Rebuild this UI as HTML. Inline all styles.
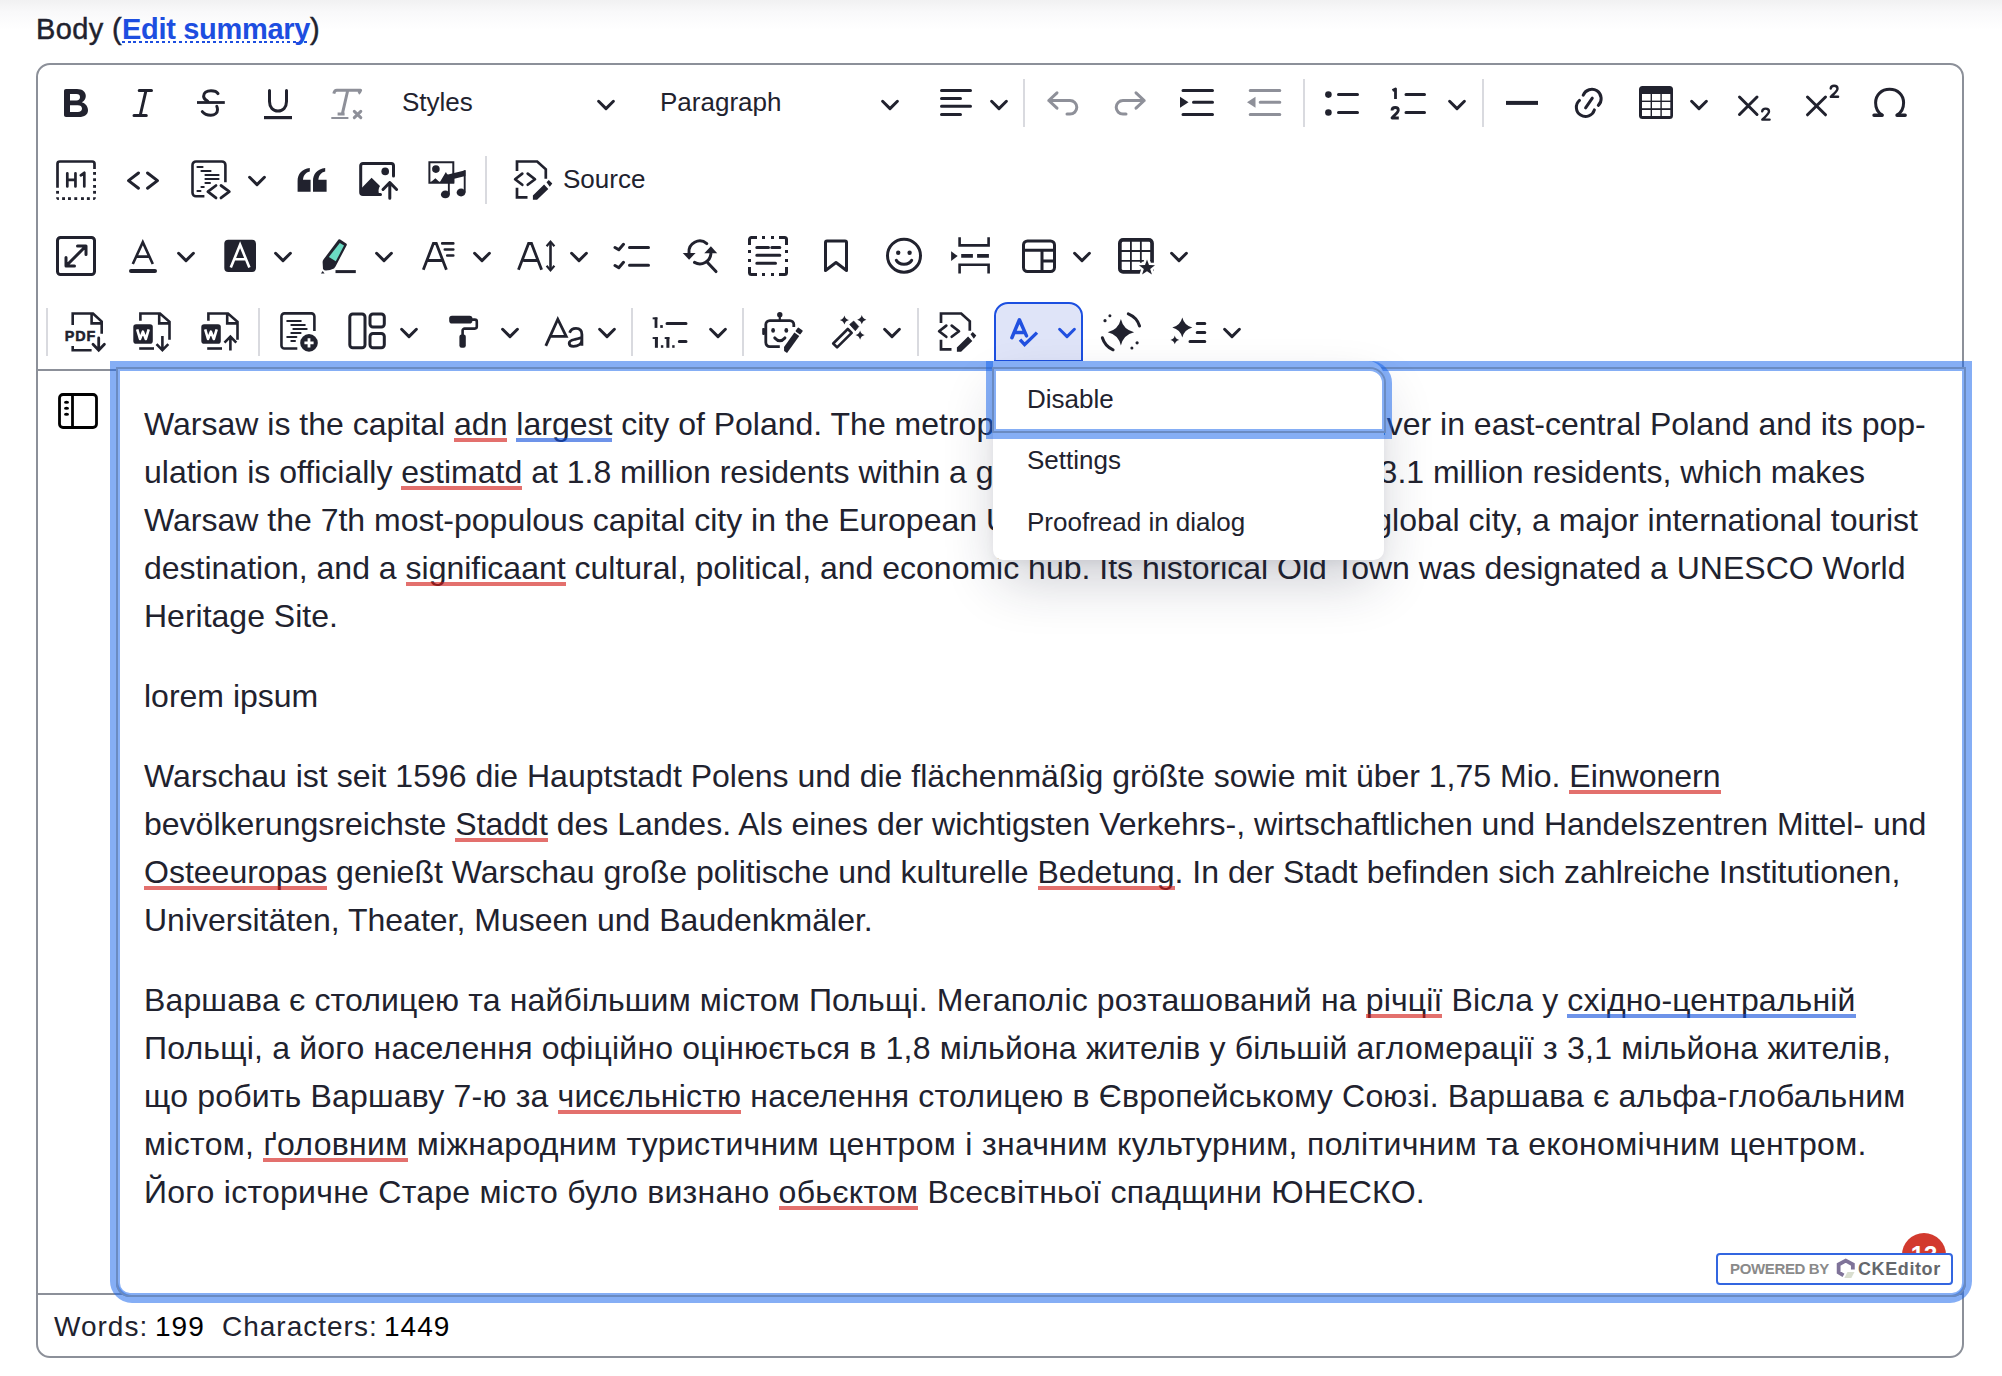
<!DOCTYPE html>
<html><head><meta charset="utf-8">
<style>
html,body{margin:0;padding:0;background:#fff;}
body{width:2002px;height:1376px;position:relative;overflow:hidden;font-family:"Liberation Sans",sans-serif;color:#21222e;}
.topshade{position:absolute;left:0;top:0;width:2002px;height:30px;background:linear-gradient(#f1f1f2,#f9f9fa 40%,#ffffff);}
.label{position:absolute;left:36px;top:11px;font-size:29px;line-height:36px;white-space:nowrap;-webkit-text-stroke:0.45px #21222e;}
.label a{color:#1d4ee0;font-weight:bold;text-decoration:none;background:repeating-linear-gradient(90deg,#1d4ee0 0 2.8px,transparent 2.8px 5.7px) 0 calc(100% - 1.5px)/100% 2.4px no-repeat;}
.frame{position:absolute;left:36px;top:63px;width:1928px;height:1295px;box-sizing:border-box;border:2px solid #8c9099;border-radius:14px;}
.tbline{position:absolute;left:38px;top:369px;width:1924px;height:2px;background:#8c9099;}
.ftline{position:absolute;left:38px;top:1293px;width:1924px;height:2px;background:#8c9099;}
.i{position:absolute;overflow:visible;}
.sep{position:absolute;width:2px;background:#d9dadf;}
.t26{position:absolute;font-size:26px;line-height:32px;white-space:nowrap;}
.edit{position:absolute;left:116px;top:367px;width:1850px;height:930px;box-sizing:border-box;border:2px solid #8c9099;border-radius:0 0 14px 14px;background:#fff;}
.edl{position:absolute;left:116px;top:367px;width:1850px;height:930px;box-sizing:border-box;border:2px solid #6a8bc2;border-radius:0 0 14px 14px;}
.ring{position:absolute;left:110px;top:361px;width:1862px;height:942px;box-sizing:border-box;border:8px solid rgba(22,100,235,0.52);border-radius:0 0 22px 22px;}
.ringin{position:absolute;left:118px;top:369px;width:1846px;height:926px;box-sizing:border-box;border:2px solid rgba(22,100,235,0.52);border-radius:0 0 12px 12px;}
.p{position:absolute;left:144px;font-size:32px;line-height:48px;white-space:nowrap;}
.sp{position:relative;}
.sp::after{content:"";position:absolute;left:0;right:0;bottom:-0.2px;height:4px;background:rgba(210,25,20,0.62);}
.gr{position:relative;}
.gr::after{content:"";position:absolute;left:0;right:0;bottom:-0.2px;height:4px;background:rgba(20,80,220,0.62);}
.sidebar{position:absolute;left:58px;top:393px;}
.footer{position:absolute;top:1307px;font-size:28px;line-height:40px;white-space:nowrap;letter-spacing:1px;}
.panel{position:absolute;left:993px;top:361px;width:391px;height:199px;background:#fff;border-radius:0 16px 10px 10px;box-shadow:0 26px 56px -8px rgba(30,35,60,0.24),0 3px 8px rgba(30,35,60,0.05);}
.mi{position:absolute;left:1027px;font-size:26px;line-height:32px;white-space:nowrap;}
.itemb{position:absolute;left:992px;top:367px;width:394px;height:66px;box-sizing:border-box;border:2px solid #6a8bc2;border-radius:0 16px 0 0;}
.itemring{position:absolute;left:986px;top:361px;width:406px;height:78px;box-sizing:border-box;border:8px solid rgba(22,100,235,0.52);border-radius:0 22px 0 0;}
.itemringin{position:absolute;left:994px;top:369px;width:390px;height:62px;box-sizing:border-box;border:2px solid rgba(22,100,235,0.52);border-radius:0 14px 0 0;}
.powered{position:absolute;left:1716px;top:1253px;width:237px;height:32px;box-sizing:border-box;border:2px solid #3366e0;border-radius:4px;background:#fff;}
.badge{position:absolute;left:1902px;top:1233px;width:44px;height:44px;border-radius:50%;background:#d23a2e;color:#fff;font-weight:bold;font-size:24px;line-height:44px;text-align:center;}
</style></head><body>
<div class="topshade"></div>
<div class="label"><span style="letter-spacing:0.35px">Body (</span><a style="letter-spacing:-0.3px;-webkit-text-stroke:0">Edit summary</a>)</div>
<div class="frame"></div>
<div class="tbline"></div>
<div class="ftline"></div>
<svg class="i" style="left:56.0px;top:83.0px" width="40" height="40" viewBox="0 0 40 40"><path fill="#21222e" fill-rule="evenodd" d="M10,6 H21 C26.5,6 29.8,8.8 29.8,13 C29.8,16 28.2,18 25.8,19.2 C29.2,20.3 32,23 32,27.2 C32,31.6 28.6,34 23,34 H10 C8.8,34 8,33.2 8,32 V8 C8,6.8 8.8,6 10,6 Z M14,11 V17.4 H20.5 C22.8,17.4 24,16.2 24,14.2 C24,12.2 22.8,11 20.5,11 Z M14,22.2 V29 H21.8 C24.4,29 26,27.8 26,25.6 C26,23.4 24.4,22.2 21.8,22.2 Z"/></svg>
<svg class="i" style="left:123.0px;top:83.0px" width="40" height="40" viewBox="0 0 40 40"><path d="M16.2,7.5 H28.5 M11,32.5 H23.3 M23,7.5 L17.2,32.5" fill="none" stroke="#21222e" stroke-width="3" stroke-linecap="round" stroke-linejoin="round"/></svg>
<svg class="i" style="left:191.0px;top:83.0px" width="40" height="40" viewBox="0 0 40 40"><path d="M27,10.6 C25.5,8.3 23,7.8 20,7.8 C15.5,7.8 12.6,10 12.6,13.2 C12.6,15.5 14.5,17 16.8,18.3 M25.8,23.3 C26.3,24.3 26.5,25.5 26.5,26.8 C26.5,30 23.8,32.2 19.8,32.2 C16,32.2 13.2,31 11.3,28.6" fill="none" stroke="#21222e" stroke-width="3" stroke-linecap="round" stroke-linejoin="round"/><path d="M6,19.5 H33.8" fill="none" stroke="#21222e" stroke-width="2.8"/></svg>
<svg class="i" style="left:258.0px;top:83.0px" width="40" height="40" viewBox="0 0 40 40"><path d="M11.5,7.5 V18.5 C11.5,24.2 15,28 20,28 C25,28 28.5,24.2 28.5,18.5 V7.5" fill="none" stroke="#21222e" stroke-width="3" stroke-linecap="round" stroke-linejoin="round"/><path d="M6,34.6 H34" fill="none" stroke="#21222e" stroke-width="3.2"/></svg>
<svg class="i" style="left:327.0px;top:83.0px" width="40" height="40" viewBox="0 0 40 40"><path d="M6.8,10.6 Q7.6,7.3 9.8,7.3 H33.6 Q32.8,9.6 31.4,10.4 M20.6,8 L15.4,30.6 M10.6,30.9 H17.6" fill="none" stroke="#8e9099" stroke-width="3" stroke-linejoin="round"/><path d="M4.3,35 H21.4" fill="none" stroke="#8e9099" stroke-width="2"/><path d="M27.3,28.3 L33.8,34.6 M33.8,28.3 L27.3,34.6" fill="none" stroke="#8e9099" stroke-width="3" stroke-linecap="round" stroke-linejoin="round"/></svg>
<div class="t26" style="left:402px;top:86px">Styles</div>
<svg class="i" style="left:586.0px;top:84.5px" width="40" height="40" viewBox="0 0 40 40"><path d="M12.6,16.3 L20,23.6 L27.4,16.3" fill="none" stroke="#21222e" stroke-width="3" stroke-linecap="round" stroke-linejoin="round"/></svg>
<div class="t26" style="left:660px;top:86px">Paragraph</div>
<svg class="i" style="left:870.0px;top:84.5px" width="40" height="40" viewBox="0 0 40 40"><path d="M12.6,16.3 L20,23.6 L27.4,16.3" fill="none" stroke="#21222e" stroke-width="3" stroke-linecap="round" stroke-linejoin="round"/></svg>
<svg class="i" style="left:936.0px;top:83.0px" width="40" height="40" viewBox="0 0 40 40"><path d="M5.5,7.5 H34.5 M5.5,15.5 H24.5 M5.5,23.3 H34.5 M5.5,31.5 H24.5" fill="none" stroke="#21222e" stroke-width="3" stroke-linecap="round" stroke-linejoin="round"/></svg>
<svg class="i" style="left:979.0px;top:84.5px" width="40" height="40" viewBox="0 0 40 40"><path d="M12.6,16.3 L20,23.6 L27.4,16.3" fill="none" stroke="#21222e" stroke-width="3" stroke-linecap="round" stroke-linejoin="round"/></svg>
<div class="sep" style="left:1023px;top:79px;height:48px"></div>
<svg class="i" style="left:1043.0px;top:83.0px" width="40" height="40" viewBox="0 0 40 40"><path d="M14,9.8 L5.8,17.5 L14,25.2 M5.8,17.5 H27 A6.8,6.8 0 0 1 27,31.1 H24" fill="none" stroke="#8e9099" stroke-width="3" stroke-linecap="round" stroke-linejoin="round"/></svg>
<svg class="i" style="left:1109.8px;top:83.0px" width="40" height="40" viewBox="0 0 40 40"><path d="M26,9.8 L34.2,17.5 L26,25.2 M34.2,17.5 H13 A6.8,6.8 0 0 0 13,31.1 H16" fill="none" stroke="#8e9099" stroke-width="3" stroke-linecap="round" stroke-linejoin="round"/></svg>
<svg class="i" style="left:1177.0px;top:83.0px" width="40" height="40" viewBox="0 0 40 40"><path d="M6,7.4 H35.5 M16.5,19.3 H35.5 M6,31.5 H35.5" fill="none" stroke="#21222e" stroke-width="3" stroke-linecap="round" stroke-linejoin="round"/><path d="M3,13.8 L11.5,19.3 L3,24.8 Z" fill="#21222e"/></svg>
<svg class="i" style="left:1243.8px;top:83.0px" width="40" height="40" viewBox="0 0 40 40"><path d="M6.2,7.4 H35.8 M16.2,19.3 H35.8 M6.2,31.5 H35.8" fill="none" stroke="#8e9099" stroke-width="3" stroke-linecap="round" stroke-linejoin="round"/><path d="M11.5,13.8 L3,19.3 L11.5,24.8 Z" fill="#8e9099"/></svg>
<div class="sep" style="left:1303px;top:79px;height:48px"></div>
<svg class="i" style="left:1322.0px;top:83.0px" width="40" height="40" viewBox="0 0 40 40"><circle cx="6.4" cy="11.6" r="3.3" fill="#21222e"/><circle cx="6.4" cy="29.5" r="3.3" fill="#21222e"/><path d="M16.5,11.6 H35.5 M16.5,29.5 H35.5" fill="none" stroke="#21222e" stroke-width="3" stroke-linecap="round" stroke-linejoin="round"/></svg>
<svg class="i" style="left:1388.0px;top:83.0px" width="40" height="40" viewBox="0 0 40 40"><path d="M4.5,7.5 L7.5,6 V16" fill="none" stroke="#21222e" stroke-width="2.8" stroke-linejoin="round"/><path d="M4,27.5 C4,25.5 5.5,24.5 7.2,24.5 C9,24.5 10.3,25.6 10.3,27.3 C10.3,29.5 7,31.5 4,35 H10.8" fill="none" stroke="#21222e" stroke-width="2.8" stroke-linejoin="round"/><path d="M18,11.6 H36.5 M18,29.5 H36.5" fill="none" stroke="#21222e" stroke-width="3" stroke-linecap="round" stroke-linejoin="round"/></svg>
<svg class="i" style="left:1437.0px;top:84.5px" width="40" height="40" viewBox="0 0 40 40"><path d="M12.6,16.3 L20,23.6 L27.4,16.3" fill="none" stroke="#21222e" stroke-width="3" stroke-linecap="round" stroke-linejoin="round"/></svg>
<div class="sep" style="left:1482px;top:79px;height:48px"></div>
<svg class="i" style="left:1501.0px;top:83.0px" width="40" height="40" viewBox="0 0 40 40"><path d="M5,19.9 H37" fill="none" stroke="#21222e" stroke-width="4"/></svg>
<svg class="i" style="left:1569.0px;top:83.0px" width="40" height="40" viewBox="0 0 40 40"><path d="M14.2,12.2 A9.3,9.3 0 1 1 29.3,22.3 M10.5,17.4 A9.2,9.2 0 1 0 25.4,26.9 M16.6,24.8 L23.3,15.2" fill="none" stroke="#21222e" stroke-width="3" stroke-linecap="round" stroke-linejoin="round" stroke-width="2.9"/></svg>
<svg class="i" style="left:1636.0px;top:83.0px" width="40" height="40" viewBox="0 0 40 40"><rect x="3" y="3" width="34" height="33" rx="3.5" fill="#21222e"/><g fill="#fff"><rect x="6" y="11" width="8.6" height="6.6"/><rect x="16" y="11" width="8.4" height="6.6"/><rect x="25.8" y="11" width="8.5" height="6.6"/><rect x="6" y="19" width="8.6" height="6.2"/><rect x="16" y="19" width="8.4" height="6.2"/><rect x="25.8" y="19" width="8.5" height="6.2"/><rect x="6" y="27" width="8.6" height="6"/><rect x="16" y="27" width="8.4" height="6"/><rect x="25.8" y="27" width="8.5" height="6"/></g></svg>
<svg class="i" style="left:1679.0px;top:84.5px" width="40" height="40" viewBox="0 0 40 40"><path d="M12.6,16.3 L20,23.6 L27.4,16.3" fill="none" stroke="#21222e" stroke-width="3" stroke-linecap="round" stroke-linejoin="round"/></svg>
<svg class="i" style="left:1734.0px;top:83.0px" width="40" height="40" viewBox="0 0 40 40"><path d="M5.5,14 L23,31.5 M23,14 L5.5,31.5" fill="none" stroke="#21222e" stroke-width="3" stroke-linecap="round" stroke-linejoin="round"/><path d="M28.2,28.3 C28.4,26.6 29.6,25.6 31.6,25.6 C33.6,25.6 35,26.8 35,28.6 C35,31 32,33 28.3,36.6 H35.6" fill="none" stroke="#21222e" stroke-width="2.4" stroke-linejoin="round" stroke-linecap="round"/></svg>
<svg class="i" style="left:1801.5px;top:83.0px" width="40" height="40" viewBox="0 0 40 40"><path d="M5.5,14 L23.5,31.8 M23.5,14 L5.5,31.8" fill="none" stroke="#21222e" stroke-width="3" stroke-linecap="round" stroke-linejoin="round"/><path d="M28.7,5.5 C28.9,3.8 30.1,2.8 32.1,2.8 C34.1,2.8 35.5,4 35.5,5.8 C35.5,8.2 32.5,10.2 28.8,13.8 H36.1" fill="none" stroke="#21222e" stroke-width="2.4" stroke-linejoin="round" stroke-linecap="round"/></svg>
<svg class="i" style="left:1868.5px;top:83.0px" width="40" height="40" viewBox="0 0 40 40"><path d="M12.8,31.8 C8.2,29 6.6,24.5 6.6,19.8 C6.6,11.8 12.5,6.3 20.6,6.3 C28.7,6.3 34.6,11.8 34.6,19.8 C34.6,24.5 33,29 28.4,31.8" fill="none" stroke="#21222e" stroke-width="3" stroke-linecap="round" stroke-linejoin="round"/><path d="M5,32.2 H13.2 M28,32.2 H36.2" fill="none" stroke="#21222e" stroke-width="3.4" stroke-linecap="round"/></svg>
<svg class="i" style="left:56.0px;top:160.0px" width="40" height="40" viewBox="0 0 40 40"><path d="M1.5,27.7 V3.8 Q1.5,1.5 3.8,1.5 H36.2 Q38.5,1.5 38.5,3.8 V8.9" fill="none" stroke="#21222e" stroke-width="2.7"/><g fill="#21222e"><rect x="0.1" y="30.9" width="2.9" height="2.8"/><rect x="6.1" y="37.2" width="2.9" height="2.8"/><rect x="12" y="37.2" width="2.9" height="2.8"/><rect x="18.3" y="37.2" width="2.9" height="2.8"/><rect x="25" y="37.2" width="2.9" height="2.8"/><rect x="30.9" y="37.2" width="2.9" height="2.8"/><rect x="37.1" y="12" width="2.9" height="2.8"/><rect x="37.1" y="18.3" width="2.9" height="2.8"/><rect x="37.1" y="25" width="2.9" height="2.8"/><rect x="37.1" y="30.9" width="2.9" height="2.8"/><path d="M0.1,37.2 H2.9 V40 Q0.1,40 0.1,37.2 Z M37.1,37.2 H39.9 Q39.9,40 37.1,40 Z"/></g><path d="M11.3,13.3 V26.5 M19.45,13.3 V26.5 M11.3,19.85 H19.45 M24.8,15.3 L28.3,12.8 V26.5" fill="none" stroke="#21222e" stroke-width="2.7" stroke-linecap="round" stroke-linejoin="round"/></svg>
<svg class="i" style="left:123.0px;top:160.0px" width="40" height="40" viewBox="0 0 40 40"><path d="M15.5,13 L5.5,20.6 L15.5,28.2 M24.5,13 L34.5,20.6 L24.5,28.2" fill="none" stroke="#21222e" stroke-width="3" stroke-linecap="round" stroke-linejoin="round"/></svg>
<svg class="i" style="left:191.0px;top:160.0px" width="40" height="40" viewBox="0 0 40 40"><path d="M13.4,36.3 H5 A3.5,3.5 0 0 1 1.5,32.8 V5 A3.5,3.5 0 0 1 5,1.5 H30.9 A3.5,3.5 0 0 1 34.4,5 V22.2" fill="none" stroke="#21222e" stroke-width="2.6"/><path d="M6.4,7 H11.6 M10.4,11 H19.6 M14.4,15 H27.6 M14.4,19 H27.6 M14.4,22.9 H19 M10.4,26.9 H12.8 M6.4,30.9 H9.5" fill="none" stroke="#21222e" stroke-width="2" stroke-linecap="round"/><path d="M25,25.5 L16.9,31.6 L25,37.9 M30,25.5 L38.3,31.6 L30,37.9" fill="none" stroke="#21222e" stroke-width="2.8" stroke-linecap="round" stroke-linejoin="round"/></svg>
<svg class="i" style="left:237.0px;top:161.3px" width="40" height="40" viewBox="0 0 40 40"><path d="M12.6,16.3 L20,23.6 L27.4,16.3" fill="none" stroke="#21222e" stroke-width="3" stroke-linecap="round" stroke-linejoin="round"/></svg>
<svg class="i" style="left:292.4px;top:160.0px" width="40" height="40" viewBox="0 0 40 40"><path fill="#21222e" d="M5.6,31.7 V21 C5.6,14 9.8,9 17.8,8 V11.4 C13.5,12.4 11.4,15.3 11,19.8 H18.6 V31.7 Z M21,31.7 V21 C21,14 25.2,9 33.2,8 V11.4 C28.9,12.4 26.8,15.3 26.4,19.8 H34.6 V31.7 Z"/></svg>
<svg class="i" style="left:358.8px;top:160.0px" width="40" height="40" viewBox="0 0 40 40"><path d="M21.5,34.6 H4 A2.3,2.3 0 0 1 1.7,32.3 V5.8 A2.3,2.3 0 0 1 4,3.5 H32.2 A2.3,2.3 0 0 1 34.5,5.8 V16" fill="none" stroke="#21222e" stroke-width="3" stroke-linecap="round" stroke-linejoin="round"/><path fill="#21222e" d="M1.7,34.6 V29 L12.6,17.8 L21,26 C19.3,28.5 19,32 20.5,34.6 Z"/><circle cx="26.2" cy="11.4" r="3.8" fill="#21222e"/><path d="M30.8,38.2 V22.5 M24,29.5 L30.8,22.5 L37.6,29.5" fill="none" stroke="#21222e" stroke-width="3" stroke-linecap="round" stroke-linejoin="round"/></svg>
<svg class="i" style="left:426.6px;top:160.0px" width="40" height="40" viewBox="0 0 40 40"><path d="M2.4,22.85 V2.2 H26.3 V22.85 Z" fill="none" stroke="#21222e" stroke-width="2"/><circle cx="8.9" cy="9.1" r="3.8" fill="#21222e"/><path fill="#21222e" d="M3.35,22.5 L8.4,18.2 L12.9,22.5 Z M12.5,22.85 L18.9,12 L20,14 L21,14.5 L38.4,10.2 V16 L27.25,18.7 V22.85 Z"/><path d="M21.85,22 V34.4 M37.7,10.3 V32.6" fill="none" stroke="#21222e" stroke-width="1.9"/><ellipse cx="18.35" cy="34.4" rx="4.45" ry="3.9" fill="#21222e"/><ellipse cx="34.05" cy="32.5" rx="4.4" ry="3.9" fill="#21222e"/></svg>
<div class="sep" style="left:485px;top:156px;height:48px"></div>
<svg class="i" style="left:512.5px;top:160.0px" width="40" height="40" viewBox="0 0 40 40"><path d="M4,11 V1.5 H24.2 L32.8,9.3 V18.7" fill="none" stroke="#21222e" stroke-width="2.7"/><path d="M4,27.7 V37.4 H14.5" fill="none" stroke="#21222e" stroke-width="2.7"/><path d="M9.3,13.6 L2.1,19.2 L9.3,24.8 M14.7,13.6 L22,19.2 L14.7,24.8" fill="none" stroke="#21222e" stroke-width="2.7" stroke-linecap="round" stroke-linejoin="round"/><path d="M19.9,35.4 L31.1,24.6 L35.3,28.9 L24.1,39.8 H19.9 Z M33.5,22.2 L35.8,20.1 L39.3,23.6 L36.8,26.7 Z" fill="#21222e"/></svg>
<div class="t26" style="left:563px;top:163px">Source</div>
<svg class="i" style="left:56.0px;top:236.0px" width="40" height="40" viewBox="0 0 40 40"><rect x="1.5" y="1.5" width="37" height="37" rx="3" fill="none" stroke="#21222e" stroke-width="3" stroke-linecap="round" stroke-linejoin="round"/><path d="M10.5,29.5 L29.5,10.5 M21.5,10 H30 V18.5 M10,21.5 V30 H18.5" fill="none" stroke="#21222e" stroke-width="3" stroke-linecap="round" stroke-linejoin="round" stroke-linecap="butt"/></svg>
<svg class="i" style="left:123.0px;top:236.0px" width="40" height="40" viewBox="0 0 40 40"><path d="M9.8,28 L19.8,6.2 L29.8,28 M13.3,20.6 H26.3" fill="none" stroke="#21222e" stroke-width="2.6" stroke-linejoin="miter"/><path d="M8,35 H32" fill="none" stroke="#21222e" stroke-width="4" stroke-linecap="round"/></svg>
<svg class="i" style="left:166.0px;top:237.3px" width="40" height="40" viewBox="0 0 40 40"><path d="M12.6,16.3 L20,23.6 L27.4,16.3" fill="none" stroke="#21222e" stroke-width="3" stroke-linecap="round" stroke-linejoin="round"/></svg>
<svg class="i" style="left:220.0px;top:236.0px" width="40" height="40" viewBox="0 0 40 40"><rect x="4.3" y="3.8" width="31.7" height="32.2" rx="4" fill="#21222e"/><path d="M10.8,31.5 L20.1,8.8 L29.4,31.5 M14.4,23.2 H25.8" fill="none" stroke="#fff" stroke-width="2.6"/></svg>
<svg class="i" style="left:263.0px;top:237.3px" width="40" height="40" viewBox="0 0 40 40"><path d="M12.6,16.3 L20,23.6 L27.4,16.3" fill="none" stroke="#21222e" stroke-width="3" stroke-linecap="round" stroke-linejoin="round"/></svg>
<svg class="i" style="left:318.0px;top:236.0px" width="40" height="40" viewBox="0 0 40 40"><path d="M20.5,3.6 Q21.3,2.9 22.2,3.4 L28.2,7.5 Q29.2,8.3 28.7,9.3 L17.5,30.4 L16,32.4 Q12,34.5 8,34.6 Q6,34.6 5,33 L4.6,26 Q4.6,24.5 5.5,23.5 Z" fill="#21222e"/><path d="M21.8,7.1 L26,9.6 L17.8,25.3 L10.9,20.9 Z" fill="#6bdbc4"/><path d="M2.9,37.6 L4.7,35 L6.6,37.6 Z" fill="#21222e"/><path d="M17.5,35.6 H37.8" fill="none" stroke="#21222e" stroke-width="3"/></svg>
<svg class="i" style="left:364.0px;top:237.3px" width="40" height="40" viewBox="0 0 40 40"><path d="M12.6,16.3 L20,23.6 L27.4,16.3" fill="none" stroke="#21222e" stroke-width="3" stroke-linecap="round" stroke-linejoin="round"/></svg>
<svg class="i" style="left:418.2px;top:236.0px" width="40" height="40" viewBox="0 0 40 40"><path d="M5.3,33.8 L15.4,7.5 H18.3 L28.4,33.8 M9.8,24.5 H24.6" fill="none" stroke="#21222e" stroke-width="2.8" stroke-linejoin="miter"/><path d="M24.2,7.4 H35.3 M26.8,13.5 H35.3 M29.2,19.5 H35.3" fill="none" stroke="#21222e" stroke-width="2.6" stroke-linecap="round"/></svg>
<svg class="i" style="left:462.0px;top:237.3px" width="40" height="40" viewBox="0 0 40 40"><path d="M12.6,16.3 L20,23.6 L27.4,16.3" fill="none" stroke="#21222e" stroke-width="3" stroke-linecap="round" stroke-linejoin="round"/></svg>
<svg class="i" style="left:516.0px;top:236.0px" width="40" height="40" viewBox="0 0 40 40"><path d="M2.45,33.8 L12.6,7.5 H15.5 L25.6,33.8 M7.3,24.5 H21.2" fill="none" stroke="#21222e" stroke-width="2.8" stroke-linejoin="miter"/><path d="M34.5,6.5 V33.5" fill="none" stroke="#21222e" stroke-width="2.6"/><path d="M30.6,10.2 L34.5,5.6 L38.4,10.2 M30.6,29.8 L34.5,34.4 L38.4,29.8" fill="none" stroke="#21222e" stroke-width="2.2" stroke-linejoin="miter"/></svg>
<svg class="i" style="left:559.0px;top:237.3px" width="40" height="40" viewBox="0 0 40 40"><path d="M12.6,16.3 L20,23.6 L27.4,16.3" fill="none" stroke="#21222e" stroke-width="3" stroke-linecap="round" stroke-linejoin="round"/></svg>
<svg class="i" style="left:612.0px;top:236.0px" width="40" height="40" viewBox="0 0 40 40"><path d="M3,11.5 L6.8,13.8 L11.5,8.3 M3,29.5 L6.8,31.8 L11.5,26.3" fill="none" stroke="#21222e" stroke-width="3" stroke-linecap="round" stroke-linejoin="round" stroke-width="2.8"/><path d="M17.5,11.5 H36.5 M17.5,29.3 H36.5" fill="none" stroke="#21222e" stroke-width="3" stroke-linecap="round" stroke-linejoin="round"/></svg>
<svg class="i" style="left:680.0px;top:236.0px" width="40" height="40" viewBox="0 0 40 40"><path d="M26.8,7.6 A10.8,10.8 0 0 0 9,17" fill="none" stroke="#21222e" stroke-width="3" stroke-linecap="round" stroke-linejoin="round" stroke-width="3.6"/><path d="M2.7,16.9 H15.6 L9.1,23.8 Z" fill="#21222e"/><path d="M14.5,26.4 A11,11 0 0 0 30.9,17.5" fill="none" stroke="#21222e" stroke-width="3" stroke-linecap="round" stroke-linejoin="round" stroke-width="3.6"/><path d="M24.3,17.2 H37.2 L30.9,10.2 Z" fill="#21222e"/><path d="M27.5,26.4 L36,35.6" fill="none" stroke="#21222e" stroke-width="3" stroke-linecap="round" stroke-linejoin="round" stroke-width="3.8"/></svg>
<svg class="i" style="left:748.0px;top:236.0px" width="40" height="40" viewBox="0 0 40 40"><path d="M1.5,9 V3.5 A2,2 0 0 1 3.5,1.5 H9 M31,1.5 H36.5 A2,2 0 0 1 38.5,3.5 V9 M38.5,31 V36.5 A2,2 0 0 1 36.5,38.5 H31 M9,38.5 H3.5 A2,2 0 0 1 1.5,36.5 V31 M14,1.5 H17 M23,1.5 H26 M14,38.5 H17 M23,38.5 H26 M1.5,14 V17 M1.5,23 V26 M38.5,14 V17 M38.5,23 V26" fill="none" stroke="#21222e" stroke-width="3"/><path d="M8.8,11.5 H20.5 M23.8,11.5 H31.8 M8.8,19.2 H31.8 M8.8,27.2 H27.5" fill="none" stroke="#21222e" stroke-width="3" stroke-linecap="round" stroke-linejoin="round"/></svg>
<svg class="i" style="left:816.0px;top:236.0px" width="40" height="40" viewBox="0 0 40 40"><path d="M9.5,6.5 A1.5,1.5 0 0 1 11,5 H29 A1.5,1.5 0 0 1 30.5,6.5 V34.5 L20,26.5 L9.5,34.5 Z" fill="none" stroke="#21222e" stroke-width="3" stroke-linecap="round" stroke-linejoin="round"/></svg>
<svg class="i" style="left:884.0px;top:236.0px" width="40" height="40" viewBox="0 0 40 40"><circle cx="20" cy="19.7" r="16.5" fill="none" stroke="#21222e" stroke-width="3" stroke-linecap="round" stroke-linejoin="round"/><circle cx="14.2" cy="16.8" r="2.2" fill="#21222e"/><circle cx="25.6" cy="16.8" r="2.2" fill="#21222e"/><path d="M12.3,24.3 C15,29.5 25,29.5 27.7,24.3" fill="none" stroke="#21222e" stroke-width="3" stroke-linecap="round" stroke-linejoin="round"/></svg>
<svg class="i" style="left:951.0px;top:236.0px" width="40" height="40" viewBox="0 0 40 40"><path d="M8.6,1.2 V9.4 H37.6 V1.2 M8.6,37.5 V28.8 H37.6 V37.5" fill="none" stroke="#21222e" stroke-width="2.6"/><path d="M10.2,19.9 H21.9 M26.1,19.9 H37.9" fill="none" stroke="#21222e" stroke-width="3.8"/><path d="M0.1,15.2 L6.7,20.1 L0.1,25 Z" fill="#21222e"/></svg>
<svg class="i" style="left:1019.0px;top:236.0px" width="40" height="40" viewBox="0 0 40 40"><rect x="4.5" y="5" width="31" height="30.6" rx="4" fill="none" stroke="#21222e" stroke-width="3" stroke-linecap="round" stroke-linejoin="round"/><path d="M4.5,14.2 H35.5 M23,14.2 V35.6 M23,25 H35.5" fill="none" stroke="#21222e" stroke-width="3"/></svg>
<svg class="i" style="left:1062.0px;top:237.3px" width="40" height="40" viewBox="0 0 40 40"><path d="M12.6,16.3 L20,23.6 L27.4,16.3" fill="none" stroke="#21222e" stroke-width="3" stroke-linecap="round" stroke-linejoin="round"/></svg>
<svg class="i" style="left:1116.0px;top:236.0px" width="40" height="40" viewBox="0 0 40 40"><rect x="3.85" y="3.95" width="32.2" height="31.9" rx="3.2" fill="none" stroke="#21222e" stroke-width="3.7"/><path d="M14.9,4 V35.8 M24.85,4 V35.8 M4,15 H36 M4,24.9 H36" fill="none" stroke="#21222e" stroke-width="1.8"/><path d="M31,23.4 L33,29.1 L39,29.2 L34.2,32.9 L35.9,38.6 L31,35.2 L26.1,38.6 L27.8,32.9 L23,29.2 L29,29.1 Z" fill="#21222e" stroke="#fff" stroke-width="5" stroke-linejoin="round" paint-order="stroke"/></svg>
<svg class="i" style="left:1159.0px;top:237.3px" width="40" height="40" viewBox="0 0 40 40"><path d="M12.6,16.3 L20,23.6 L27.4,16.3" fill="none" stroke="#21222e" stroke-width="3" stroke-linecap="round" stroke-linejoin="round"/></svg>
<div class="sep" style="left:46px;top:308px;height:48px"></div>
<svg class="i" style="left:64.8px;top:312.0px" width="40" height="40" viewBox="0 0 40 40"><path d="M7.7,12.9 V1.5 H28 L36.7,9.5 V21.8 M26.6,1.5 V11.35 H36.7" fill="none" stroke="#21222e" stroke-width="2.6"/><path d="M7.7,34 V38.3 H26.6" fill="none" stroke="#21222e" stroke-width="2.6"/><text x="-0.2" y="28.6" font-family="Liberation Sans" font-weight="bold" font-size="14.4" fill="#21222e" stroke="#21222e" stroke-width="0.5" textLength="30.4" lengthAdjust="spacing">PDF</text><path d="M33.7,26 V38 M28,32.2 L33.7,38.2 L39.4,32.2" fill="none" stroke="#21222e" stroke-width="2.8" stroke-linecap="round" stroke-linejoin="miter"/></svg>
<svg class="i" style="left:132.0px;top:312.0px" width="40" height="40" viewBox="0 0 40 40"><path d="M8.4,8.7 V1.5 H28 L37.5,9.8 V27.8 M27.2,1.5 V11.4 H37.5" fill="none" stroke="#21222e" stroke-width="2.6"/><path d="M7.2,36.5 H22" fill="none" stroke="#21222e" stroke-width="2.6"/><rect x="1.3" y="12.2" width="19.5" height="19.5" rx="2.8" fill="#21222e"/><path d="M5.2,17.4 L8,27 L10.9,19.6 L13.8,27 L16.7,17.4" fill="none" stroke="#fff" stroke-width="2.6" stroke-linejoin="round"/><path d="M30.4,23.9 V38 M24.5,32.2 L30.4,38.2 L36.3,32.2" fill="none" stroke="#21222e" stroke-width="2.6" stroke-linejoin="miter"/></svg>
<svg class="i" style="left:200.0px;top:312.0px" width="40" height="40" viewBox="0 0 40 40"><path d="M8.4,8.7 V1.5 H28 L37.5,9.8 V27.8 M27.2,1.5 V11.4 H37.5" fill="none" stroke="#21222e" stroke-width="2.6"/><path d="M7.2,36.5 H22" fill="none" stroke="#21222e" stroke-width="2.6"/><rect x="1.3" y="12.2" width="19.5" height="19.5" rx="2.8" fill="#21222e"/><path d="M5.2,17.4 L8,27 L10.9,19.6 L13.8,27 L16.7,17.4" fill="none" stroke="#fff" stroke-width="2.6" stroke-linejoin="round"/><path d="M30.4,38.5 V25 M24.5,30.6 L30.4,24.6 L36.3,30.6" fill="none" stroke="#21222e" stroke-width="2.6" stroke-linejoin="miter"/></svg>
<div class="sep" style="left:258px;top:308px;height:48px"></div>
<svg class="i" style="left:279.0px;top:312.0px" width="40" height="40" viewBox="0 0 40 40"><path d="M18.3,36.5 H5.45 A3,3 0 0 1 2.45,33.5 V4.4 A3,3 0 0 1 5.45,1.4 H32.4 A3,3 0 0 1 35.4,4.4 V19" fill="none" stroke="#21222e" stroke-width="2.6"/><path d="M8.2,8.9 H21.8 M12.3,12.9 H25.8 M14.3,16.9 H27.7 M12.3,21 H21.6 M8.2,25 H17.4 M12.3,29 H16" fill="none" stroke="#21222e" stroke-width="2" stroke-linecap="round"/><circle cx="30" cy="30.9" r="10.6" fill="#fff"/><circle cx="30" cy="30.9" r="8.8" fill="#21222e"/><path d="M30,26.3 V35.5 M25.4,30.9 H34.6" fill="none" stroke="#fff" stroke-width="2.8"/></svg>
<svg class="i" style="left:347.0px;top:312.0px" width="40" height="40" viewBox="0 0 40 40"><rect x="2.8" y="1.9" width="15.2" height="33.9" rx="3" fill="none" stroke="#21222e" stroke-width="3" stroke-linecap="round" stroke-linejoin="round"/><rect x="23" y="1.9" width="14.3" height="13.2" rx="3" fill="none" stroke="#21222e" stroke-width="3" stroke-linecap="round" stroke-linejoin="round"/><rect x="23" y="21.5" width="14.3" height="14.3" rx="3" fill="none" stroke="#21222e" stroke-width="3" stroke-linecap="round" stroke-linejoin="round"/></svg>
<svg class="i" style="left:389.0px;top:313.3px" width="40" height="40" viewBox="0 0 40 40"><path d="M12.6,16.3 L20,23.6 L27.4,16.3" fill="none" stroke="#21222e" stroke-width="3" stroke-linecap="round" stroke-linejoin="round"/></svg>
<svg class="i" style="left:443.0px;top:312.0px" width="40" height="40" viewBox="0 0 40 40"><rect x="6.2" y="3.8" width="23.2" height="7.8" rx="2.8" fill="#21222e"/><path d="M29,7.6 H31.8 A2,2 0 0 1 33.8,9.6 V14.6 A2,2 0 0 1 31.8,16.6 H21.8 A2,2 0 0 0 19.6,18.6 V23" fill="none" stroke="#21222e" stroke-width="2.6"/><rect x="16.4" y="22.5" width="6.4" height="13.2" rx="2.2" fill="#21222e"/></svg>
<svg class="i" style="left:490.0px;top:313.3px" width="40" height="40" viewBox="0 0 40 40"><path d="M12.6,16.3 L20,23.6 L27.4,16.3" fill="none" stroke="#21222e" stroke-width="3" stroke-linecap="round" stroke-linejoin="round"/></svg>
<svg class="i" style="left:543.8px;top:312.0px" width="40" height="40" viewBox="0 0 40 40"><path d="M1.8,33.9 L13.8,7.2 L22.2,24.3 H6.3" fill="none" stroke="#21222e" stroke-width="2.8" stroke-linejoin="miter"/><path d="M25.6,20.8 C26.8,17.5 29.2,16.4 32,16.4 C35.6,16.4 37.9,18.6 37.9,22.5 V33.8 M37.9,25.2 C36.4,26.3 33.8,26.8 30.5,27.5 C26.5,28.3 25.2,29.8 25.2,31.2 C25.2,33.2 26.8,34.4 29.4,34.4 C33.6,34.4 37.9,32.2 37.9,27.6" fill="none" stroke="#21222e" stroke-width="2.8"/></svg>
<svg class="i" style="left:587.0px;top:313.3px" width="40" height="40" viewBox="0 0 40 40"><path d="M12.6,16.3 L20,23.6 L27.4,16.3" fill="none" stroke="#21222e" stroke-width="3" stroke-linecap="round" stroke-linejoin="round"/></svg>
<div class="sep" style="left:631px;top:308px;height:48px"></div>
<svg class="i" style="left:649.5px;top:312.0px" width="40" height="40" viewBox="0 0 40 40"><g fill="#21222e"><rect x="2.65" y="5.4" width="4.75" height="1.9"/><rect x="4.6" y="5.4" width="2.8" height="10.5"/><rect x="10.2" y="13.1" width="2.6" height="2.8"/><rect x="2.65" y="25.1" width="5.25" height="1.9"/><rect x="4.9" y="25.1" width="3" height="10.7"/><rect x="10.9" y="33.2" width="2.4" height="2.6"/><rect x="14.7" y="25.1" width="4.7" height="1.9"/><rect x="16.4" y="25.1" width="3" height="10.7"/><rect x="22.2" y="33.2" width="2.4" height="2.6"/></g><path d="M17,11.4 H36 M29.3,29.5 H36" fill="none" stroke="#21222e" stroke-width="3" stroke-linecap="round" stroke-linejoin="round"/></svg>
<svg class="i" style="left:698.0px;top:313.3px" width="40" height="40" viewBox="0 0 40 40"><path d="M12.6,16.3 L20,23.6 L27.4,16.3" fill="none" stroke="#21222e" stroke-width="3" stroke-linecap="round" stroke-linejoin="round"/></svg>
<div class="sep" style="left:742px;top:308px;height:48px"></div>
<svg class="i" style="left:762.0px;top:312.0px" width="40" height="40" viewBox="0 0 40 40"><path d="M17.8,34.6 H7.8 A4,4 0 0 1 3.8,30.6 V12.6 A4,4 0 0 1 7.8,8.6 H27.8 A4,4 0 0 1 31.8,12.6 V15" fill="none" stroke="#21222e" stroke-width="2.8"/><circle cx="17.8" cy="2.8" r="2.7" fill="#21222e"/><path d="M17.8,4 V8.6" fill="none" stroke="#21222e" stroke-width="2.2"/><rect x="0.2" y="16.1" width="2.8" height="6.8" rx="0.8" fill="#21222e"/><ellipse cx="11.1" cy="18.4" rx="1.9" ry="2.4" fill="#21222e"/><ellipse cx="24.3" cy="18.4" rx="1.9" ry="2.4" fill="#21222e"/><path d="M12.8,25.9 Q17.85,31.6 22.9,25.9" fill="none" stroke="#21222e" stroke-width="3" stroke-linecap="round" stroke-linejoin="round" stroke-width="2.8"/><g transform="translate(22.6,39.3) rotate(-54.4)" fill="#21222e"><path d="M0,3 V-0.6 L3.2,-3 H21 V3 Z"/><rect x="22.6" y="-3" width="4.8" height="6" rx="0.8"/></g></svg>
<svg class="i" style="left:829.0px;top:312.0px" width="40" height="40" viewBox="0 0 40 40"><path d="M4.2,31.5 L18.8,17 L22.7,20.9 L8.1,35.4 Z" fill="none" stroke="#21222e" stroke-width="2.6" stroke-linejoin="round"/><path d="M20.7,12.5 L24.7,9.1 L29.7,14.5 L26.3,18.7 Z" fill="#21222e" stroke="#21222e" stroke-width="0.8" stroke-linejoin="round"/><path d="M15.4,3.4000000000000004 Q16.32,7.08 20.0,8 Q16.32,8.92 15.4,12.6 Q14.48,8.92 10.8,8 Q14.48,7.08 15.4,3.4000000000000004 Z" fill="#21222e"/><path d="M32.8,3.1000000000000005 Q33.72,6.78 37.4,7.7 Q33.72,8.620000000000001 32.8,12.3 Q31.879999999999995,8.620000000000001 28.199999999999996,7.7 Q31.879999999999995,6.78 32.8,3.1000000000000005 Z" fill="#21222e"/><path d="M31.1,18.5 Q32.02,22.18 35.7,23.1 Q32.02,24.020000000000003 31.1,27.700000000000003 Q30.18,24.020000000000003 26.5,23.1 Q30.18,22.18 31.1,18.5 Z" fill="#21222e"/></svg>
<svg class="i" style="left:872.0px;top:313.3px" width="40" height="40" viewBox="0 0 40 40"><path d="M12.6,16.3 L20,23.6 L27.4,16.3" fill="none" stroke="#21222e" stroke-width="3" stroke-linecap="round" stroke-linejoin="round"/></svg>
<div class="sep" style="left:917px;top:308px;height:48px"></div>
<svg class="i" style="left:936.5px;top:312.0px" width="40" height="40" viewBox="0 0 40 40"><path d="M4,11 V1.5 H24.2 L32.8,9.3 V18.7" fill="none" stroke="#21222e" stroke-width="2.7"/><path d="M4,27.7 V37.4 H14.5" fill="none" stroke="#21222e" stroke-width="2.7"/><path d="M9.3,13.6 L2.1,19.2 L9.3,24.8 M14.7,13.6 L22,19.2 L14.7,24.8" fill="none" stroke="#21222e" stroke-width="2.7" stroke-linecap="round" stroke-linejoin="round"/><path d="M19.9,35.4 L31.1,24.6 L35.3,28.9 L24.1,39.8 H19.9 Z M33.5,22.2 L35.8,20.1 L39.3,23.6 L36.8,26.7 Z" fill="#21222e"/></svg>
<div style="position:absolute;left:994px;top:302px;width:89px;height:60px;box-sizing:border-box;background:#dfe4f8;border:2px solid #1c4fe0;border-radius:14px 14px 0 0"></div>
<svg class="i" style="left:1004.0px;top:312.0px" width="40" height="40" viewBox="0 0 40 40"><path d="M7.9,25.7 L15.4,7.8 L22.5,23.9 M10.7,20.4 H20.4" fill="none" stroke="#2150e0" stroke-width="3.5" stroke-linejoin="round" stroke-linecap="round"/><path d="M16,27.6 L20.6,32.6 L33,20.6" fill="none" stroke="#2150e0" stroke-width="3.4"/></svg>
<svg class="i" style="left:1047.0px;top:313.3px" width="40" height="40" viewBox="0 0 40 40"><path d="M12.6,16.3 L20,23.6 L27.4,16.3" fill="none" stroke="#2150e0" stroke-width="3" stroke-linecap="round" stroke-linejoin="round"/></svg>
<svg class="i" style="left:1101.0px;top:312.0px" width="40" height="40" viewBox="0 0 40 40"><path d="M19.9,7.100000000000001 Q22.407999999999998,17.792 33.099999999999994,20.3 Q22.407999999999998,22.808 19.9,33.5 Q17.392,22.808 6.699999999999999,20.3 Q17.392,17.792 19.9,7.100000000000001 Z" fill="#21222e"/><path d="M27.3,1.9 A19.5,19.5 0 0 1 38.55,13.97" fill="none" stroke="#21222e" stroke-width="3" stroke-linecap="round" stroke-linejoin="round" stroke-width="2.8"/><path d="M12.07,37.81 A19.5,19.5 0 0 1 1.35,25.7" fill="none" stroke="#21222e" stroke-width="3" stroke-linecap="round" stroke-linejoin="round" stroke-width="2.8"/><circle cx="4" cy="8.7" r="1.6" fill="#21222e"/><circle cx="8.9" cy="3.8" r="1.5" fill="#21222e"/><circle cx="36.1" cy="30.8" r="1.6" fill="#21222e"/><circle cx="30.9" cy="36" r="1.5" fill="#21222e"/></svg>
<svg class="i" style="left:1169.0px;top:312.0px" width="40" height="40" viewBox="0 0 40 40"><path d="M13.3,5.4 Q15.3,13.4 23.3,15.4 Q15.3,17.4 13.3,25.4 Q11.3,17.4 3.3000000000000007,15.4 Q11.3,13.4 13.3,5.4 Z" fill="#21222e"/><path d="M5.8,23.5 Q6.592,27.107999999999997 10.2,27.9 Q6.592,28.692 5.8,32.3 Q5.008,28.692 1.3999999999999995,27.9 Q5.008,27.107999999999997 5.8,23.5 Z" fill="#21222e"/><path d="M28.2,11.6 H35.8 M28.2,20.6 H35.8 M21,29.6 H35.8" fill="none" stroke="#21222e" stroke-width="3" stroke-linecap="round" stroke-linejoin="round" stroke-width="3"/></svg>
<svg class="i" style="left:1212.0px;top:313.3px" width="40" height="40" viewBox="0 0 40 40"><path d="M12.6,16.3 L20,23.6 L27.4,16.3" fill="none" stroke="#21222e" stroke-width="3" stroke-linecap="round" stroke-linejoin="round"/></svg>
<div class="edit"></div>
<div class="p" style="top:400px">Warsaw is the capital <span class="sp">adn</span> <span class="gr">largest</span> city of Poland. The metropolis stands on the Vistula River in east-central Poland and its pop-<br>ulation is officially <span class="sp">estimatd</span> at 1.8 million residents within a greater metropolitan area of 3.1 million residents, which makes<br>Warsaw the 7th most-populous capital city in the European Union. Warsaw is an alpha global city, a major international tourist<br>destination, and a <span class="sp">significaant</span> cultural, political, and economic hub. Its historical Old Town was designated a UNESCO World<br>Heritage Site.</div>
<div class="p" style="top:672px">lorem ipsum</div>
<div class="p" style="top:752px">Warschau ist seit 1596 die Hauptstadt Polens und die flächenmäßig größte sowie mit über 1,75 Mio. <span class="sp">Einwonern</span><br>bevölkerungsreichste <span class="sp">Staddt</span> des Landes. Als eines der wichtigsten Verkehrs-, wirtschaftlichen und Handelszentren Mittel- und<br><span class="sp">Osteeuropas</span> genießt Warschau große politische und kulturelle <span class="sp">Bedetung</span>. In der Stadt befinden sich zahlreiche Institutionen,<br>Universitäten, Theater, Museen und Baudenkmäler.</div>
<div class="p" style="top:976px"><span style="letter-spacing:0.143px">Варшава є столицею та найбільшим містом Польщі. Мегаполіс розташований на <span class="sp">річції</span> Вісла у <span class="gr">східно-центральній</span></span><br><span style="letter-spacing:0.193px">Польщі, а його населення офіційно оцінюється в 1,8 мільйона жителів у більшій агломерації з 3,1 мільйона жителів,</span><br><span style="letter-spacing:0.183px">що робить Варшаву 7-ю за <span class="sp">чисєльністю</span> населення столицею в Європейському Союзі. Варшава є альфа-глобальним</span><br><span style="letter-spacing:0.312px">містом, <span class="sp">ґоловним</span> міжнародним туристичним центром і значним культурним, політичним та економічним центром.</span><br><span style="letter-spacing:0.261px">Його історичне Старе місто було визнано <span class="sp">обьєктом</span> Всесвітньої спадщини ЮНЕСКО.</span></div>
<div class="ring"></div>
<div class="ringin"></div>
<div class="edl"></div>
<svg class="sidebar" width="40" height="36" viewBox="0 0 40 36" style="position:absolute"><rect x="1.5" y="1.5" width="37" height="33" rx="3.5" fill="none" stroke="#000" stroke-width="2.8"/><path d="M14.5,1.5 V34.5" stroke="#000" stroke-width="2.8"/><ellipse cx="8.5" cy="9.3" rx="2.5" ry="1.5"/><ellipse cx="8.5" cy="15.3" rx="2.5" ry="1.5"/><ellipse cx="8.5" cy="21.3" rx="2.5" ry="1.5"/></svg>
<div class="badge">13</div>
<div class="powered"></div>
<div style="position:absolute;left:1730px;top:1259px;font-size:15px;line-height:20px;font-weight:bold;color:#8a8a8a;letter-spacing:-0.35px;white-space:nowrap">POWERED BY</div>
<svg style="position:absolute;left:1836px;top:1258px" width="20" height="21" viewBox="0 0 20 21"><path d="M16.85,11.5 V6.5 L9.75,2.65 L2.65,6.5 V14.5 L7.5,17.35" fill="none" stroke="#7f7399" stroke-width="3.8"/><path d="M8.3,20 L11.5,14 H18.5 L15.3,20 Z" fill="#d9decf"/></svg>
<div style="position:absolute;left:1858px;top:1256.5px;font-size:18px;line-height:24px;font-weight:bold;color:#65686c;letter-spacing:0.6px;white-space:nowrap">CKEditor</div>
<div class="panel"></div>
<div class="mi" style="top:383px">Disable</div>
<div class="mi" style="top:444px">Settings</div>
<div class="mi" style="top:506px">Proofread in dialog</div>
<div class="itemring"></div>
<div class="itemringin"></div>
<div class="itemb"></div>
<div class="footer" style="left:54px">Words:</div><div class="footer" style="left:155px;color:#000">199</div><div class="footer" style="left:222px">Characters:</div><div class="footer" style="left:384px;color:#000">1449</div>
</body></html>
